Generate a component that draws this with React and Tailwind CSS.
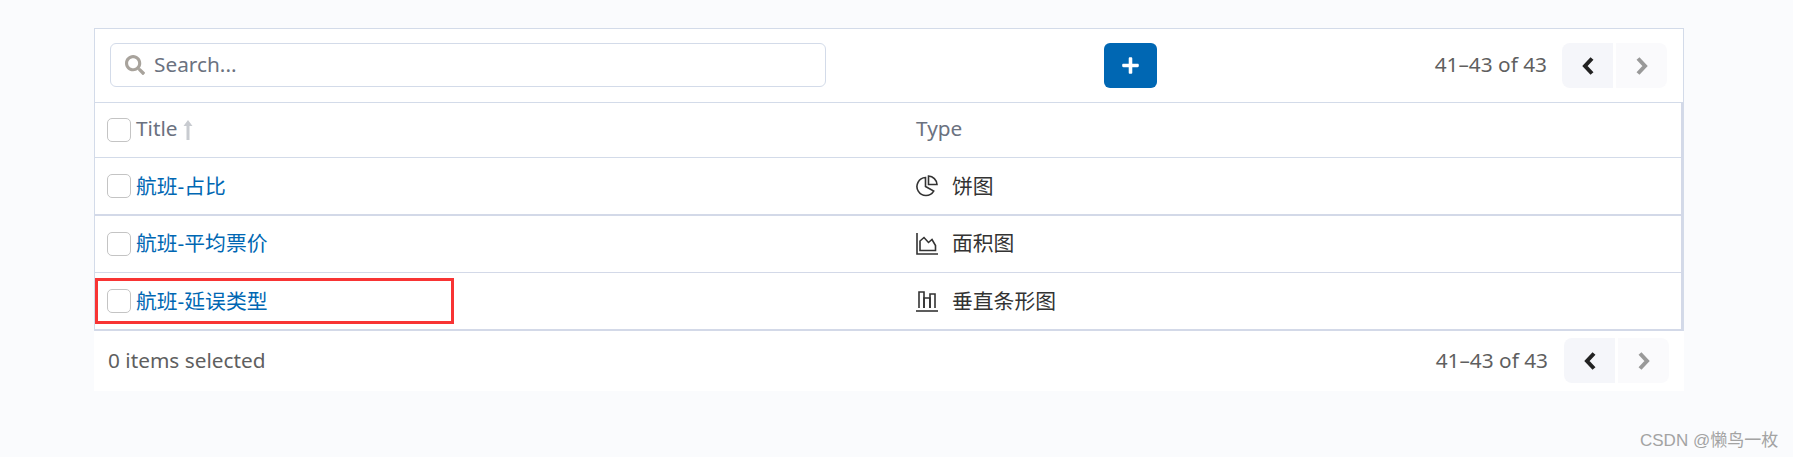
import React from 'react'
import { FaSearch, FaPlus } from 'react-icons/fa'

const rows = [
  { title: '航班-占比', type: '饼图', icon: 'pie', border: 'border-b-2', h: 'h-[58px]', lift: '' },
  { title: '航班-平均票价', type: '面积图', icon: 'area', border: 'border-b', h: 'h-[57px]', lift: 'pb-[2px]' },
  { title: '航班-延误类型', type: '垂直条形图', icon: 'bar', border: 'border-b-2', h: 'h-[58px]', lift: '', marked: true },
]

function PieIcon() {
  return (
    <svg width="22" height="22" viewBox="0 0 22 22" fill="none" stroke="#333" strokeWidth="1.6">
      <path d="M9.5 2.5a9 9 0 1 0 8.2 13.6L9.5 11.5z" />
      <path d="M12.5 1a9 9 0 0 1 8.5 8.5h-8.5z" />
    </svg>
  )
}

function AreaIcon() {
  return (
    <svg width="22" height="22" viewBox="0 0 22 22" fill="none" stroke="#333" strokeWidth="1.6">
      <path d="M1 0v21h21" />
      <path d="M4 17.5V8l4-3.5 4.5 5 3.5-3 3.5 6v5z" />
    </svg>
  )
}

function BarIcon() {
  return (
    <svg width="22" height="22" viewBox="0 0 22 22" fill="none" stroke="#333" strokeWidth="1.6">
      <path d="M0 21h22" />
      <path d="M3 18V2h5v16" />
      <path d="M8 18V8h6v10" />
      <path d="M14 18V4h5v14" />
    </svg>
  )
}

const icons = { pie: PieIcon, area: AreaIcon, bar: BarIcon }

function Checkbox() {
  return <span className="w-6 h-6 rounded-[5px] border border-[#c4c4c4] bg-white shrink-0" />
}

function Chevron({ d, color }) {
  return (
    <svg width="14" height="20" viewBox="0 0 14 20" fill="none" stroke={color} strokeWidth="4">
      <path d={d} />
    </svg>
  )
}

function Pager({ className, textClass }) {
  return (
    <div className={'flex items-center ' + className}>
      <span className={'text-[20.8px] text-[#5f5f5f] ' + textClass}>41–43 of 43</span>
      <button className="w-[51px] h-[45px] bg-[#f5f6fa] rounded-l-lg flex items-center justify-center">
        <Chevron d="M11 2.5 4 10l7 7.5" color="#222" />
      </button>
      <button className="w-[51px] h-[45px] ml-[3px] bg-[#fafafc] rounded-r-lg flex items-center justify-center">
        <Chevron d="M3 2.5 10 10l-7 7.5" color="#999" />
      </button>
    </div>
  )
}

export default function App() {
  return (
    <div className="relative h-[457px] bg-[#fafbfd] pt-[28px] pl-[94px] font-['Noto_Sans','Noto_Sans_CJK_SC',sans-serif] overflow-hidden">
      <div className="w-[1590px]">
        <div className="bg-white border-t border-x border-[#d3dbe9]">
          {/* toolbar */}
          <div className="h-[74px] flex items-start pt-[14px] pl-[15px] pr-[16px] border-b border-[#d3dbe9]">
            <div className="w-[716px] h-[44px] rounded-md border border-[#d3dbe9] flex items-center pl-[14px] text-[#a8a39c]">
              <FaSearch size={20} />
              <span className="ml-[9px] text-[20.8px] text-[#6b7280]">Search...</span>
            </div>
            <button className="ml-[278px] w-[53px] h-[45px] rounded-md bg-[#0067b3] text-white flex items-center justify-center">
              <FaPlus size={19} />
            </button>
            <Pager className="ml-auto" textClass="mr-[15px] pb-[2px]" />
          </div>
          {/* table */}
          <div className="border-r-2 border-[#d3d9e8]">
            <div className="h-[55px] flex items-center pl-[12px] border-b border-[#d3dbe9] text-[20.8px] text-[#6b7280]">
              <div className="w-[809px] flex items-center">
                <Checkbox />
                <span className="ml-[5px] leading-[24px] pb-[4px]">Title</span>
                <svg className="ml-[5px]" width="10" height="20" viewBox="0 0 10 20" fill="#c8cbd0">
                  <path d="M5 0l4.5 6H6.5v14h-3V6H.5z" />
                </svg>
              </div>
              <span className="leading-[24px] pb-[4px]">Type</span>
            </div>
            {rows.map((row) => {
              const Icon = icons[row.icon]
              return (
                <div key={row.title} className={'relative flex items-center pl-[12px] border-[#d3d9e8] ' + row.h + ' ' + row.border}>
                  <div className="w-[809px] flex items-center">
                    <Checkbox />
                    <a className={'ml-[5px] text-[20.8px] leading-[24px] text-[#0067b3] ' + row.lift}>{row.title}</a>
                  </div>
                  <Icon />
                  <span className={'ml-[14px] text-[20.8px] leading-[24px] text-[#333] ' + row.lift}>{row.type}</span>
                  {row.marked && (
                    <div className="absolute left-0 top-[5px] w-[359px] h-[46px] border-[3px] border-[#f83434]" />
                  )}
                </div>
              )
            })}
          </div>
        </div>
        {/* footer */}
        <div className="h-[60px] bg-white flex items-start pt-[7px] pl-[14px] pr-[15px]">
          <span className="text-[20.8px] leading-[45px] text-[#5f5f5f] pb-[2px]">0 items selected</span>
          <Pager className="ml-auto" textClass="mr-[16px]" />
        </div>
      </div>
      <span className="absolute left-[1640px] top-[428px] text-[17px] text-[#a3a3a3] font-['Liberation_Sans','Noto_Sans_CJK_SC',sans-serif]">CSDN @懒鸟一枚</span>
    </div>
  )
}
